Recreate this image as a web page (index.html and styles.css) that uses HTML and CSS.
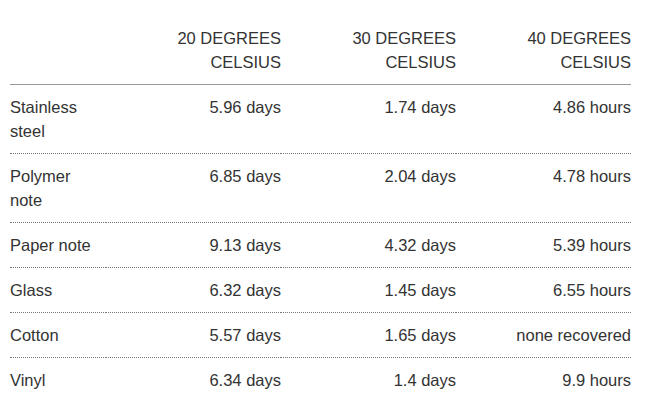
FILE: index.html
```html
<!DOCTYPE html>
<html>
<head>
<meta charset="utf-8">
<link rel="stylesheet" href="styles.css">
</head>
<body>
<table class="data">
  <colgroup>
    <col class="c-label"><col class="c-val"><col class="c-val"><col class="c-val">
  </colgroup>
  <thead>
    <tr>
      <th class="label"></th>
      <th>20 DEGREES CELSIUS</th>
      <th>30 DEGREES CELSIUS</th>
      <th>40 DEGREES CELSIUS</th>
    </tr>
  </thead>
  <tbody>
    <tr><td class="label">Stainless steel</td><td>5.96 days</td><td>1.74 days</td><td>4.86 hours</td></tr>
    <tr><td class="label">Polymer note</td><td>6.85 days</td><td>2.04 days</td><td>4.78 hours</td></tr>
    <tr><td class="label">Paper note</td><td>9.13 days</td><td>4.32 days</td><td>5.39 hours</td></tr>
    <tr><td class="label">Glass</td><td>6.32 days</td><td>1.45 days</td><td>6.55 hours</td></tr>
    <tr><td class="label">Cotton</td><td>5.57 days</td><td>1.65 days</td><td>none recovered</td></tr>
    <tr><td class="label">Vinyl</td><td>6.34 days</td><td>1.4 days</td><td>9.9 hours</td></tr>
  </tbody>
</table>
</body>
</html>
```

FILE: styles.css
```css
html, body {
  margin: 0;
  padding: 0;
  background: #fff;
}
body {
  font-family: "Liberation Sans", Arial, sans-serif;
  font-size: 16.5px;
  line-height: 24px;
  color: #333;
}
.data {
  margin: 16px 0 0 10px;
  width: 621px;
  border-collapse: collapse;
  table-layout: fixed;
}
.c-label { width: 96px; }
.c-val { width: 175px; }
.data th {
  font-weight: normal;
  text-align: right;
  vertical-align: bottom;
  padding: 10px 0 10px 60px;
  border-bottom: 1px solid #999;
}
.data td {
  text-align: right;
  vertical-align: top;
  padding: 10px 0 10px 20px;
  border-bottom: 1px dotted #777;
}
.data tbody tr:last-child td {
  border-bottom: none;
}
.data th.label,
.data td.label {
  text-align: left;
  padding-left: 0;
  padding-right: 6px;
}
```
